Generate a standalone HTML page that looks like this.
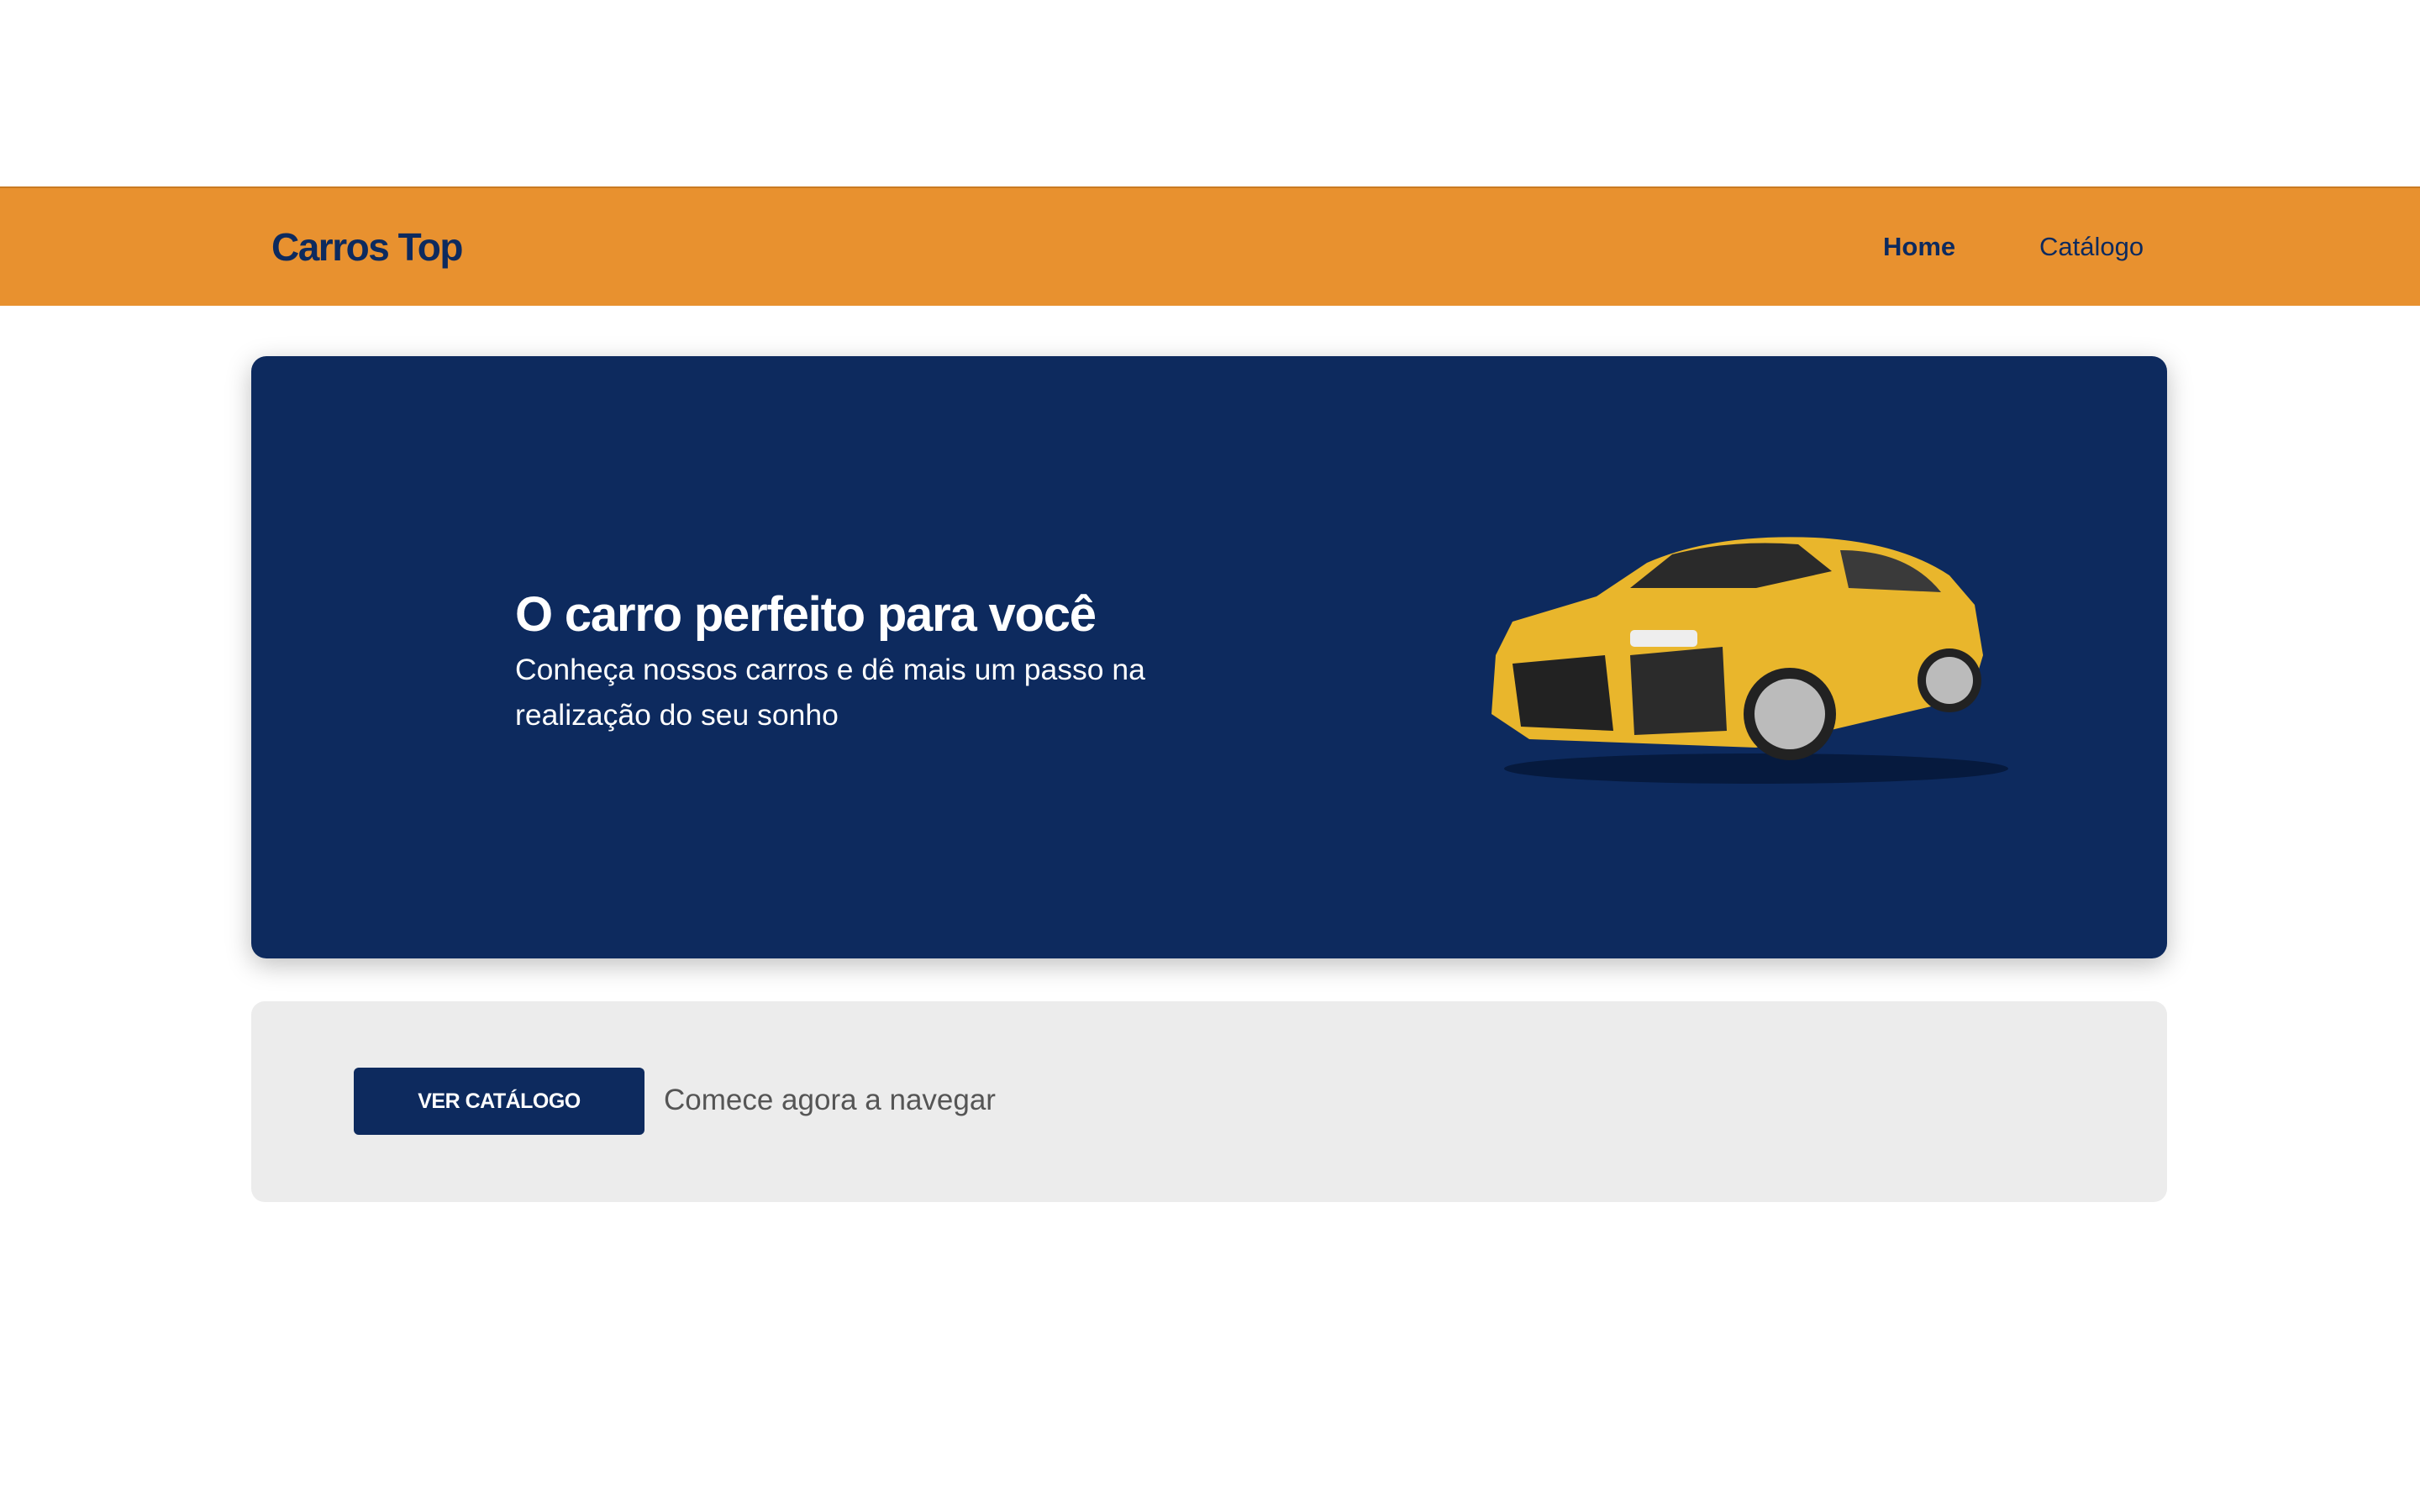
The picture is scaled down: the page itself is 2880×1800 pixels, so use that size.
<!DOCTYPE html>
<html><head><meta charset="utf-8"><style>
*{margin:0;padding:0;box-sizing:border-box}
body{width:2880px;height:1800px;background:#fff;font-family:"Liberation Sans",Arial,sans-serif;position:relative;overflow:hidden}
.hdr{position:absolute;left:0;top:222px;width:2880px;height:142px;background:#E8912F;border-top:2px solid #c97a22}
.logo{position:absolute;left:323px;top:267px;font-size:46px;font-weight:bold;color:#0D2A5E;letter-spacing:-1.5px}
.nav{position:absolute;top:276px;font-size:31px;color:#0D2A5E}
.hero{position:absolute;left:299px;top:424px;width:2280px;height:717px;background:#0D2A5E;border-radius:18px;box-shadow:0 8px 30px rgba(0,0,0,.25)}
.t{position:absolute;left:613px;top:698px;font-size:58px;font-weight:bold;color:#fff;letter-spacing:-1.2px}
.s{position:absolute;left:613px;top:770px;font-size:35.5px;line-height:54px;color:#fff}
.gray{position:absolute;left:299px;top:1192px;width:2280px;height:239px;background:#ECECEC;border-radius:16px}
.btn{position:absolute;left:421px;top:1271px;width:346px;height:80px;background:#0D2A5E;border-radius:6px;color:#fff;font-weight:bold;font-size:25px;text-align:center;line-height:80px;letter-spacing:-0.5px}
.cm{position:absolute;left:790px;top:1290px;font-size:35px;color:#555}
</style></head><body>
<div class="hdr"></div>
<div class="logo">Carros Top</div>
<div class="nav" style="left:2241px;font-weight:bold">Home</div>
<div class="nav" style="left:2427px">Catálogo</div>
<div class="hero"></div>
<div class="t">O carro perfeito para você</div>
<div class="s">Conheça nossos carros e dê mais um passo na<br>realização do seu sonho</div>
<svg style="position:absolute;left:1760px;top:630px" width="650" height="310" viewBox="0 0 650 310">
<ellipse cx="330" cy="285" rx="300" ry="18" fill="#061a3e"/>
<path d="M20 150 L40 110 L140 80 L200 40 Q280 5 400 10 Q500 15 560 55 L590 90 L600 150 L585 200 L330 260 L60 250 L15 220 Z" fill="#E9B62C"/>
<path d="M180 70 L230 30 Q300 12 380 18 L420 50 L330 70 Z" fill="#2a2a2a"/>
<path d="M430 25 Q510 25 550 75 L440 70 Z" fill="#3a3a3a"/>
<path d="M40 160 L150 150 L160 240 L50 235 Z" fill="#222"/>
<path d="M180 150 L290 140 L295 240 L185 245 Z" fill="#2b2b2b"/>
<rect x="180" y="120" width="80" height="20" rx="5" fill="#eee"/>
<circle cx="370" cy="220" r="55" fill="#222"/><circle cx="370" cy="220" r="42" fill="#bbb"/>
<circle cx="560" cy="180" r="38" fill="#222"/><circle cx="560" cy="180" r="28" fill="#bbb"/>
</svg>
<div class="gray"></div>
<div class="btn">VER CATÁLOGO</div>
<div class="cm">Comece agora a navegar</div>
</body></html>
